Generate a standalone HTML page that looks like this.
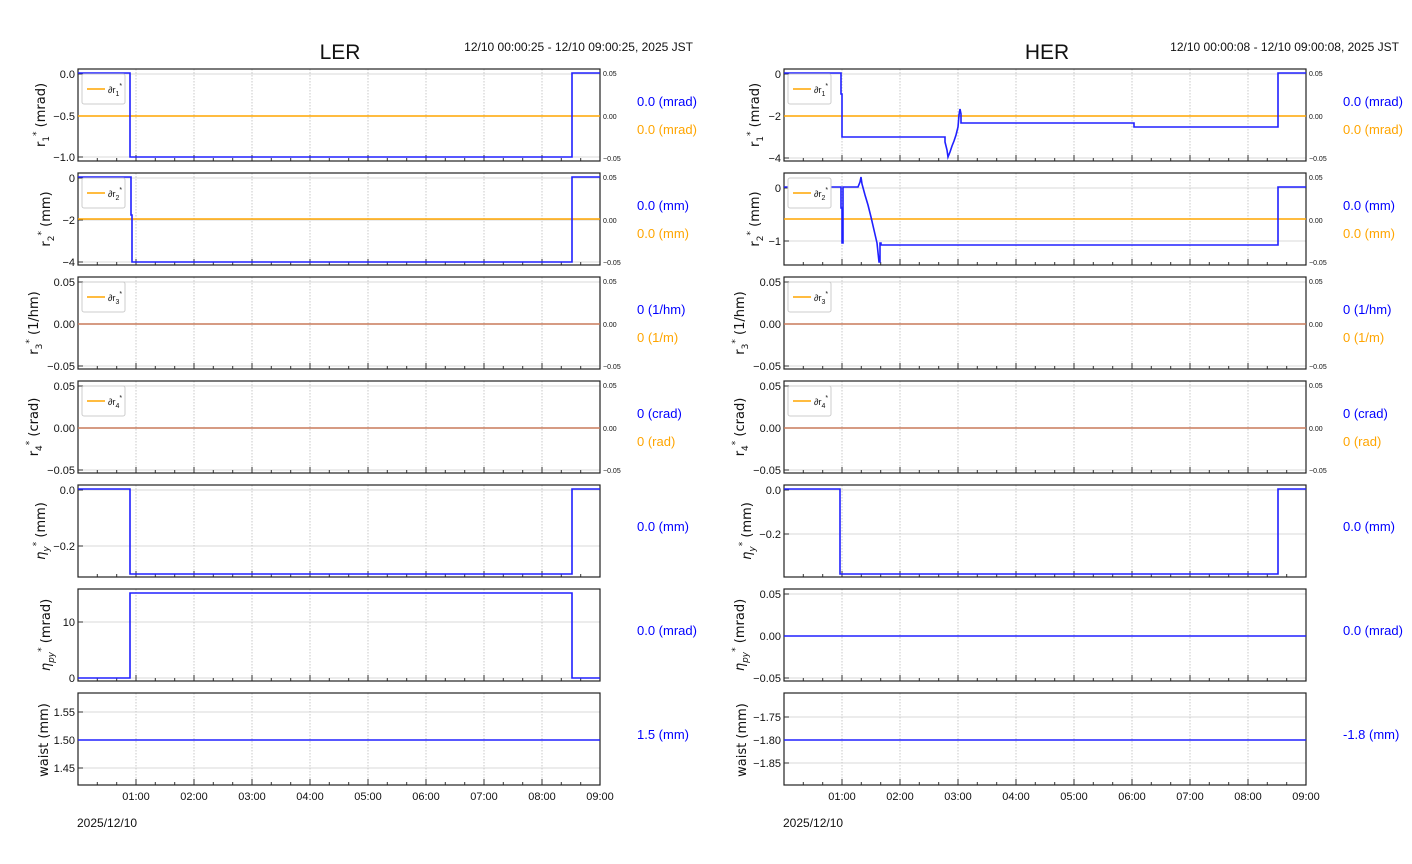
<!DOCTYPE html>
<html><head><meta charset="utf-8"><style>
html,body{margin:0;padding:0;background:#fff}
svg{display:block}
text{font-family:"Liberation Sans",sans-serif;fill:#111}
.tk{font-size:11px}
.sm{font-size:7px}
.yl{font-size:13px;font-family:"DejaVu Sans","Liberation Sans",sans-serif}
.bl{fill:#0000ff;font-size:13px}
.or{fill:#ffa500;font-size:13px}
.g{stroke:#d8d8d8;stroke-width:1}
.b{stroke:#2020ff;stroke-width:1.6;fill:none}
.o{stroke:#ffa500;stroke-width:1.6;fill:none}
</style></head><body>
<svg width="1412" height="864" viewBox="0 0 1412 864" xmlns="http://www.w3.org/2000/svg">
<defs>
<g id="ax">
<g stroke="#c8c8c8" stroke-dasharray="1.5,1.5" stroke-width="1">
<path d="M58 0V92M116 0V92M174 0V92M232 0V92M290 0V92M348 0V92M406 0V92M464 0V92"/>
</g>
<g stroke="#333" stroke-width="1">
<path d="M58 92v-6M116 92v-6M174 92v-6M232 92v-6M290 92v-6M348 92v-6M406 92v-6M464 92v-6"/>
<path d="M19.3 92v-3M38.7 92v-3M77.3 92v-3M96.7 92v-3M135.3 92v-3M154.7 92v-3M193.3 92v-3M212.7 92v-3M251.3 92v-3M270.7 92v-3M309.3 92v-3M328.7 92v-3M367.3 92v-3M386.7 92v-3M425.3 92v-3M444.7 92v-3M483.3 92v-3M502.7 92v-3"/>
</g>
<rect x="0" y="0" width="522" height="92" fill="none" stroke="#222" stroke-width="1.2"/>
</g>
<g id="leg">
<rect x="0" y="0" width="43" height="30" rx="2" fill="#fff" stroke="#ccc"/>
<path d="M5 15h18" stroke="#ffa500" stroke-width="1.6"/>
</g>
</defs>

<!-- Titles -->
<text x="340" y="59" text-anchor="middle" style="font-size:21px">LER</text>
<text x="693" y="51" text-anchor="end" style="font-size:12px">12/10 00:00:25 - 12/10 09:00:25, 2025 JST</text>
<text x="1047" y="59" text-anchor="middle" style="font-size:21px">HER</text>
<text x="1399" y="51" text-anchor="end" style="font-size:12px">12/10 00:00:08 - 12/10 09:00:08, 2025 JST</text>

<!-- ============ LER ============ -->
<!-- Panel 1 -->
<path class="g" d="M78 74H600M78 116H600M78 157H600"/>
<use href="#ax" x="78" y="69"/>
<path d="M78 74h5M78 116h5M78 157h5" stroke="#333"/>
<path class="o" d="M78 116H600"/>
<path class="b" d="M78 73H130V157H572V73H600"/>
<use href="#leg" x="82" y="74"/>
<text x="108" y="93" style="font-size:9px">∂r<tspan dy="3" font-size="7">1</tspan><tspan dy="-8" font-size="7">*</tspan></text>
<text class="tk" x="75" y="78" text-anchor="end">0.0</text>
<text class="tk" x="75" y="120" text-anchor="end">−0.5</text>
<text class="tk" x="75" y="161" text-anchor="end">−1.0</text>
<text class="sm" x="603" y="76">0.05</text><text class="sm" x="603" y="119">0.00</text><text class="sm" x="603" y="161">−0.05</text>
<text class="bl" x="637" y="106">0.0 (mrad)</text><text class="or" x="637" y="134">0.0 (mrad)</text>
<text class="yl" transform="translate(45 115) rotate(-90)" text-anchor="middle">r<tspan dy="4" font-size="9">1</tspan><tspan dy="-10" font-size="9">*</tspan><tspan dy="6"> (mrad)</tspan></text>

<!-- Panel 2 -->
<path class="g" d="M78 178H600M78 220H600M78 262H600"/>
<use href="#ax" x="78" y="173"/>
<path d="M78 178h5M78 220h5M78 262h5" stroke="#333"/>
<path class="o" d="M78 219H600"/>
<path class="b" d="M78 177H131V215H132V262H572V177H600"/>
<use href="#leg" x="82" y="178"/>
<text x="108" y="197" style="font-size:9px">∂r<tspan dy="3" font-size="7">2</tspan><tspan dy="-8" font-size="7">*</tspan></text>
<text class="tk" x="75" y="182" text-anchor="end">0</text>
<text class="tk" x="75" y="224" text-anchor="end">−2</text>
<text class="tk" x="75" y="266" text-anchor="end">−4</text>
<text class="sm" x="603" y="180">0.05</text><text class="sm" x="603" y="223">0.00</text><text class="sm" x="603" y="265">−0.05</text>
<text class="bl" x="637" y="210">0.0 (mm)</text><text class="or" x="637" y="238">0.0 (mm)</text>
<text class="yl" transform="translate(50 219) rotate(-90)" text-anchor="middle">r<tspan dy="4" font-size="9">2</tspan><tspan dy="-10" font-size="9">*</tspan><tspan dy="6"> (mm)</tspan></text>

<!-- Panel 3 -->
<path class="g" d="M78 282H600M78 366H600"/>
<use href="#ax" x="78" y="277"/>
<path d="M78 282h5M78 324h5M78 366h5" stroke="#333"/>
<path d="M78 324H600" stroke="#c87a5a" stroke-width="1.6"/>
<use href="#leg" x="82" y="282"/>
<text x="108" y="301" style="font-size:9px">∂r<tspan dy="3" font-size="7">3</tspan><tspan dy="-8" font-size="7">*</tspan></text>
<text class="tk" x="75" y="286" text-anchor="end">0.05</text>
<text class="tk" x="75" y="328" text-anchor="end">0.00</text>
<text class="tk" x="75" y="370" text-anchor="end">−0.05</text>
<text class="sm" x="603" y="284">0.05</text><text class="sm" x="603" y="327">0.00</text><text class="sm" x="603" y="369">−0.05</text>
<text class="bl" x="637" y="314">0 (1/hm)</text><text class="or" x="637" y="342">0 (1/m)</text>
<text class="yl" transform="translate(38 323) rotate(-90)" text-anchor="middle">r<tspan dy="4" font-size="9">3</tspan><tspan dy="-10" font-size="9">*</tspan><tspan dy="6"> (1/hm)</tspan></text>

<!-- Panel 4 -->
<path class="g" d="M78 386H600M78 470H600"/>
<use href="#ax" x="78" y="381"/>
<path d="M78 386h5M78 428h5M78 470h5" stroke="#333"/>
<path d="M78 428H600" stroke="#c87a5a" stroke-width="1.6"/>
<use href="#leg" x="82" y="386"/>
<text x="108" y="405" style="font-size:9px">∂r<tspan dy="3" font-size="7">4</tspan><tspan dy="-8" font-size="7">*</tspan></text>
<text class="tk" x="75" y="390" text-anchor="end">0.05</text>
<text class="tk" x="75" y="432" text-anchor="end">0.00</text>
<text class="tk" x="75" y="474" text-anchor="end">−0.05</text>
<text class="sm" x="603" y="388">0.05</text><text class="sm" x="603" y="431">0.00</text><text class="sm" x="603" y="473">−0.05</text>
<text class="bl" x="637" y="418">0 (crad)</text><text class="or" x="637" y="446">0 (rad)</text>
<text class="yl" transform="translate(38 427) rotate(-90)" text-anchor="middle">r<tspan dy="4" font-size="9">4</tspan><tspan dy="-10" font-size="9">*</tspan><tspan dy="6"> (crad)</tspan></text>

<!-- Panel 5 -->
<path class="g" d="M78 490H600M78 546H600"/>
<use href="#ax" x="78" y="485"/>
<path d="M78 490h5M78 546h5" stroke="#333"/>
<path class="b" d="M78 489H130V574H572V489H600"/>
<text class="tk" x="75" y="494" text-anchor="end">0.0</text>
<text class="tk" x="75" y="550" text-anchor="end">−0.2</text>
<text class="bl" x="637" y="531">0.0 (mm)</text>
<text class="yl" transform="translate(45 531) rotate(-90)" text-anchor="middle"><tspan font-style="italic">η</tspan><tspan dy="4" font-size="9" font-style="italic">y</tspan><tspan dy="-10" font-size="9">*</tspan><tspan dy="6"> (mm)</tspan></text>

<!-- Panel 6 -->
<path class="g" d="M78 622H600M78 678H600"/>
<use href="#ax" x="78" y="589"/>
<path d="M78 622h5M78 678h5" stroke="#333"/>
<path class="b" d="M78 678H130V593H572V678H600"/>
<text class="tk" x="75" y="626" text-anchor="end">10</text>
<text class="tk" x="75" y="682" text-anchor="end">0</text>
<text class="bl" x="637" y="635">0.0 (mrad)</text>
<text class="yl" transform="translate(50 635) rotate(-90)" text-anchor="middle"><tspan font-style="italic">η</tspan><tspan dy="4" font-size="9" font-style="italic">py</tspan><tspan dy="-10" font-size="9">*</tspan><tspan dy="6"> (mrad)</tspan></text>

<!-- Panel 7 -->
<path class="g" d="M78 712H600M78 740H600M78 768H600"/>
<use href="#ax" x="78" y="693"/>
<path d="M78 712h5M78 740h5M78 768h5" stroke="#333"/>
<path class="b" d="M78 740H600"/>
<text class="tk" x="75" y="716" text-anchor="end">1.55</text>
<text class="tk" x="75" y="744" text-anchor="end">1.50</text>
<text class="tk" x="75" y="772" text-anchor="end">1.45</text>
<text class="bl" x="637" y="739">1.5 (mm)</text>
<text class="yl" transform="translate(48 740) rotate(-90)" text-anchor="middle">waist (mm)</text>

<!-- LER x labels -->
<g class="tk" text-anchor="middle">
<text x="136" y="800">01:00</text><text x="194" y="800">02:00</text><text x="252" y="800">03:00</text><text x="310" y="800">04:00</text><text x="368" y="800">05:00</text><text x="426" y="800">06:00</text><text x="484" y="800">07:00</text><text x="542" y="800">08:00</text><text x="600" y="800">09:00</text>
</g>
<text x="77" y="827" style="font-size:12px">2025/12/10</text>

<!-- ============ HER ============ -->
<!-- Panel 1 -->
<path class="g" d="M784 74H1306M784 116H1306M784 158H1306"/>
<use href="#ax" x="784" y="69"/>
<path d="M784 74h5M784 116h5M784 158h5" stroke="#333"/>
<path class="o" d="M784 116H1306"/>
<path class="b" d="M784 73H841V94H842V137H945V142L947 150L948 157L950 152L952 146L954 141L956 135L958 127L959 115L960 109L961 114V123H1134V127H1278V73H1306"/>
<use href="#leg" x="788" y="74"/>
<text x="814" y="93" style="font-size:9px">∂r<tspan dy="3" font-size="7">1</tspan><tspan dy="-8" font-size="7">*</tspan></text>
<text class="tk" x="781" y="78" text-anchor="end">0</text>
<text class="tk" x="781" y="120" text-anchor="end">−2</text>
<text class="tk" x="781" y="162" text-anchor="end">−4</text>
<text class="sm" x="1309" y="76">0.05</text><text class="sm" x="1309" y="119">0.00</text><text class="sm" x="1309" y="161">−0.05</text>
<text class="bl" x="1343" y="106">0.0 (mrad)</text><text class="or" x="1343" y="134">0.0 (mrad)</text>
<text class="yl" transform="translate(759 115) rotate(-90)" text-anchor="middle">r<tspan dy="4" font-size="9">1</tspan><tspan dy="-10" font-size="9">*</tspan><tspan dy="6"> (mrad)</tspan></text>

<!-- Panel 2 -->
<path class="g" d="M784 188H1306M784 241H1306"/>
<use href="#ax" x="784" y="173"/>
<path d="M784 188h5M784 241h5" stroke="#333"/>
<path class="o" d="M784 219H1306"/>
<path class="b" d="M784 187H841V208H842V243H843V187H858L860 182L861 177L862 184L865 195L868 205L871 217L874 230L877 243L879 262H880V243H881V245H1278V187H1306"/>
<use href="#leg" x="788" y="178"/>
<text x="814" y="197" style="font-size:9px">∂r<tspan dy="3" font-size="7">2</tspan><tspan dy="-8" font-size="7">*</tspan></text>
<text class="tk" x="781" y="192" text-anchor="end">0</text>
<text class="tk" x="781" y="245" text-anchor="end">−1</text>
<text class="sm" x="1309" y="180">0.05</text><text class="sm" x="1309" y="223">0.00</text><text class="sm" x="1309" y="265">−0.05</text>
<text class="bl" x="1343" y="210">0.0 (mm)</text><text class="or" x="1343" y="238">0.0 (mm)</text>
<text class="yl" transform="translate(759 219) rotate(-90)" text-anchor="middle">r<tspan dy="4" font-size="9">2</tspan><tspan dy="-10" font-size="9">*</tspan><tspan dy="6"> (mm)</tspan></text>

<!-- Panel 3 -->
<path class="g" d="M784 282H1306M784 366H1306"/>
<use href="#ax" x="784" y="277"/>
<path d="M784 282h5M784 324h5M784 366h5" stroke="#333"/>
<path d="M784 324H1306" stroke="#c87a5a" stroke-width="1.6"/>
<use href="#leg" x="788" y="282"/>
<text x="814" y="301" style="font-size:9px">∂r<tspan dy="3" font-size="7">3</tspan><tspan dy="-8" font-size="7">*</tspan></text>
<text class="tk" x="781" y="286" text-anchor="end">0.05</text>
<text class="tk" x="781" y="328" text-anchor="end">0.00</text>
<text class="tk" x="781" y="370" text-anchor="end">−0.05</text>
<text class="sm" x="1309" y="284">0.05</text><text class="sm" x="1309" y="327">0.00</text><text class="sm" x="1309" y="369">−0.05</text>
<text class="bl" x="1343" y="314">0 (1/hm)</text><text class="or" x="1343" y="342">0 (1/m)</text>
<text class="yl" transform="translate(744 323) rotate(-90)" text-anchor="middle">r<tspan dy="4" font-size="9">3</tspan><tspan dy="-10" font-size="9">*</tspan><tspan dy="6"> (1/hm)</tspan></text>

<!-- Panel 4 -->
<path class="g" d="M784 386H1306M784 470H1306"/>
<use href="#ax" x="784" y="381"/>
<path d="M784 386h5M784 428h5M784 470h5" stroke="#333"/>
<path d="M784 428H1306" stroke="#c87a5a" stroke-width="1.6"/>
<use href="#leg" x="788" y="386"/>
<text x="814" y="405" style="font-size:9px">∂r<tspan dy="3" font-size="7">4</tspan><tspan dy="-8" font-size="7">*</tspan></text>
<text class="tk" x="781" y="390" text-anchor="end">0.05</text>
<text class="tk" x="781" y="432" text-anchor="end">0.00</text>
<text class="tk" x="781" y="474" text-anchor="end">−0.05</text>
<text class="sm" x="1309" y="388">0.05</text><text class="sm" x="1309" y="431">0.00</text><text class="sm" x="1309" y="473">−0.05</text>
<text class="bl" x="1343" y="418">0 (crad)</text><text class="or" x="1343" y="446">0 (rad)</text>
<text class="yl" transform="translate(744 427) rotate(-90)" text-anchor="middle">r<tspan dy="4" font-size="9">4</tspan><tspan dy="-10" font-size="9">*</tspan><tspan dy="6"> (crad)</tspan></text>

<!-- Panel 5 -->
<path class="g" d="M784 490H1306M784 534H1306"/>
<use href="#ax" x="784" y="485"/>
<path d="M784 490h5M784 534h5" stroke="#333"/>
<path class="b" d="M784 489H840V574H1278V489H1306"/>
<text class="tk" x="781" y="494" text-anchor="end">0.0</text>
<text class="tk" x="781" y="538" text-anchor="end">−0.2</text>
<text class="bl" x="1343" y="531">0.0 (mm)</text>
<text class="yl" transform="translate(751 531) rotate(-90)" text-anchor="middle"><tspan font-style="italic">η</tspan><tspan dy="4" font-size="9" font-style="italic">y</tspan><tspan dy="-10" font-size="9">*</tspan><tspan dy="6"> (mm)</tspan></text>

<!-- Panel 6 -->
<path class="g" d="M784 594H1306M784 636H1306M784 678H1306"/>
<use href="#ax" x="784" y="589"/>
<path d="M784 594h5M784 636h5M784 678h5" stroke="#333"/>
<path class="b" d="M784 636H1306"/>
<text class="tk" x="781" y="598" text-anchor="end">0.05</text>
<text class="tk" x="781" y="640" text-anchor="end">0.00</text>
<text class="tk" x="781" y="682" text-anchor="end">−0.05</text>
<text class="bl" x="1343" y="635">0.0 (mrad)</text>
<text class="yl" transform="translate(744 635) rotate(-90)" text-anchor="middle"><tspan font-style="italic">η</tspan><tspan dy="4" font-size="9" font-style="italic">py</tspan><tspan dy="-10" font-size="9">*</tspan><tspan dy="6"> (mrad)</tspan></text>

<!-- Panel 7 -->
<path class="g" d="M784 717H1306M784 740H1306M784 763H1306"/>
<use href="#ax" x="784" y="693"/>
<path d="M784 717h5M784 740h5M784 763h5" stroke="#333"/>
<path class="b" d="M784 740H1306"/>
<text class="tk" x="781" y="721" text-anchor="end">−1.75</text>
<text class="tk" x="781" y="744" text-anchor="end">−1.80</text>
<text class="tk" x="781" y="767" text-anchor="end">−1.85</text>
<text class="bl" x="1343" y="739">-1.8 (mm)</text>
<text class="yl" transform="translate(746 740) rotate(-90)" text-anchor="middle">waist (mm)</text>

<!-- HER x labels -->
<g class="tk" text-anchor="middle">
<text x="842" y="800">01:00</text><text x="900" y="800">02:00</text><text x="958" y="800">03:00</text><text x="1016" y="800">04:00</text><text x="1074" y="800">05:00</text><text x="1132" y="800">06:00</text><text x="1190" y="800">07:00</text><text x="1248" y="800">08:00</text><text x="1306" y="800">09:00</text>
</g>
<text x="783" y="827" style="font-size:12px">2025/12/10</text>
</svg>
</body></html>
